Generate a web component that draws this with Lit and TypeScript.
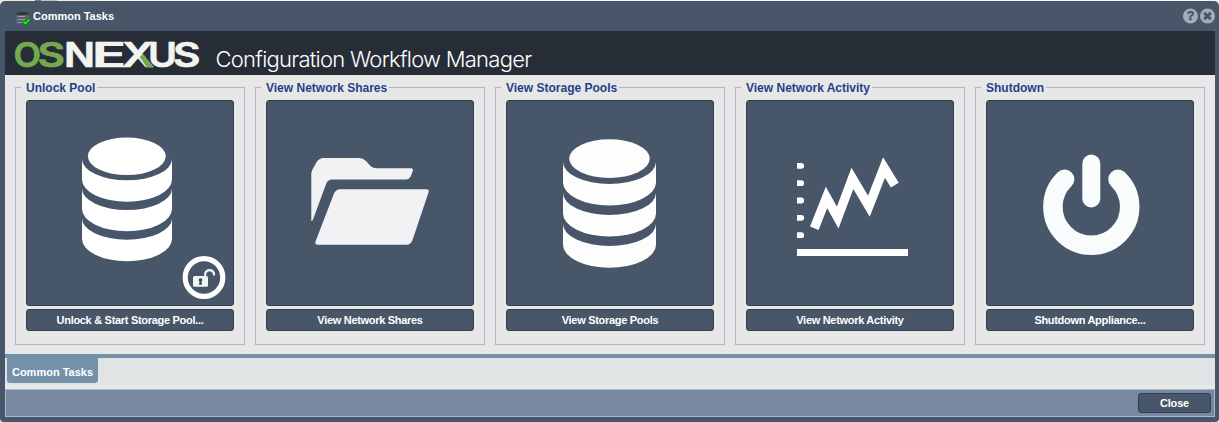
import { LitElement, html, css, svg, TemplateResult } from "lit";
import { customElement, property } from "lit/decorators.js";

const band = (l: number, r: number, top: number, side: number, ry: number) => {
  const rx = (r - l) / 2;
  return svg`<path d="M${l} ${top} A${rx} ${ry} 0 0 0 ${r} ${top} V${side} A${rx} ${ry + 1} 0 0 1 ${l} ${side} Z"/>`;
};

const unlockIcon = html`<svg viewBox="27 101 206 204" fill="#fff">
  <ellipse cx="126.8" cy="156.3" rx="38.9" ry="18.8" />
  ${band(82, 172, 159, 179.5, 21.3)} ${band(82, 172, 188.7, 209, 21.3)} ${band(82, 172, 218.4, 239, 21.3)}
  <circle cx="204" cy="277.5" r="18.8" fill="none" stroke="#fff" stroke-width="5.2" />
  <path d="M194.5 276H206.5Q208 276 208 277.5V285.3Q208 286.8 206.5 286.8H194.5Q193 286.8 193 285.3V277.5Q193 276 194.5 276Z" fill="#f3f4f6" />
  <path d="M205.2 276.5V273.4A4.6 4.6 0 0 1 214 273.4V275.6" fill="none" stroke="#f3f4f6" stroke-width="2.1" />
  <path d="M200.5 278.2a1.8 1.8 0 0 1 1 3.3l.5 3.2h-3l.5-3.2a1.8 1.8 0 0 1 1-3.3Z" fill="#36465a" />
</svg>`;

const folderIcon = html`<svg viewBox="267 101 206 204" fill="#f2f2f4">
  <path d="M311.3 221V173.5Q311.5 171 313 168.5L317 161.5Q319.500 158 323.500 158H359Q363 158 366 161L371 166.500Q373.500 168.300 376 168.300H411Q413.500 168.300 412.800 171L410.700 176.500Q409 179.500 406 179.500H332Q328 179.500 326.300 183.500L313 219.500Q312 221.500 311.300 221Z" />
  <path d="M340 189.200H426.500Q429.500 189.200 428.500 192.500L412.500 240Q410.700 244.700 406.500 244.700H318Q314.500 244.700 315.500 241.500L334 193.500Q336 189.200 340 189.200Z" />
</svg>`;

const poolIcon = html`<svg viewBox="507 101 206 204" fill="#fdfdfd">
  <ellipse cx="609.500" cy="158.600" rx="40.300" ry="19.400" />
  ${band(563, 656, 162, 182.5, 22)} ${band(563, 656, 193, 213.5, 22)} ${band(563, 656, 224, 244.7, 22)}
</svg>`;

const activityIcon = html`<svg viewBox="747 101 206 204" fill="#fff">
  ${[165.8, 183.2, 200.5, 217.8, 235.2].map(
    (y) => svg`<path d="M797 ${y - 2.9}H801.200a2.900 2.900 0 0 1 0 5.800H797Z"/>`
  )}
  <rect x="797" y="249" width="111" height="7" />
  <path d="M814.300 228.200L826.500 197.400L837.700 217.500L852.400 178.300L868.900 206.200L884 167.500L894.800 185.200" fill="none" stroke="#fff" stroke-width="9.200" stroke-miterlimit="10" />
</svg>`;

const powerIcon = html`<svg viewBox="987 101 206 204" fill="none" stroke="#f9fcfc" stroke-linecap="round">
  <path d="M1091.300 163.500V198.500" stroke-width="18" />
  <path d="M1064.600 179.300A38.400 38.400 0 1 0 1118 179.300" stroke-width="19.500" />
</svg>`;

const tasks: { group: string; action: string; icon: TemplateResult }[] = [
  { group: "Unlock Pool", action: "Unlock & Start Storage Pool...", icon: unlockIcon },
  { group: "View Network Shares", action: "View Network Shares", icon: folderIcon },
  { group: "View Storage Pools", action: "View Storage Pools", icon: poolIcon },
  { group: "View Network Activity", action: "View Network Activity", icon: activityIcon },
  { group: "Shutdown", action: "Shutdown Appliance...", icon: powerIcon },
];

// Wordmark letters: character, left edge, advance, colour.
const wordmark: [string, number, number, string][] = [
  ["O", 13.5, 27.5, "#75a850"],
  ["S", 37.5, 27.5, "#75a850"],
  ["N", 64, 31, "#f3f3ef"],
  ["E", 92, 34, "#f3f3ef"],
  ["X", 122, 32, "#f3f3ef"],
  ["U", 148, 29, "#f3f3ef"],
  ["S", 173, 27.5, "#f3f3ef"],
];

@customElement("task-card")
class TaskCard extends LitElement {
  @property() group = "";
  @property() action = "";
  @property({ attribute: false }) icon?: TemplateResult;

  static styles = css`
    :host { display: block; }
    .group {
      box-sizing: border-box; width: 230px; height: 265px; margin: 0;
      padding: 5px 10px 0; border: 1px solid #b1b3c8; min-width: 0;
    }
    legend {
      height: 15px; line-height: 17px; margin-left: -5px; padding: 0 2px 0 5px;
      font-size: 12px; font-weight: bold;
      color: #1f4287; white-space: nowrap;
    }
    button {
      box-sizing: border-box; display: block; width: 208px; margin: 0 0 3px; padding: 0;
      background: #485669; border: 1px solid #333f4e; border-radius: 3px;
      font: bold 11px/20px "Liberation Sans", Arial, sans-serif; color: #fff;
      letter-spacing: -0.3px;
    }
    .tile { height: 206px; }
    .label { height: 22px; }
    svg { display: block; width: 206px; height: 204px; }
  `;

  render() {
    return html`<fieldset class="group">
      <legend>${this.group}</legend>
      <button class="tile" aria-label=${this.action}>${this.icon}</button>
      <button class="label">${this.action}</button>
    </fieldset>`;
  }
}

@customElement("app-root")
class AppRoot extends LitElement {
  static styles = css`
    :host {
      display: block; height: 422px; overflow: hidden;
      background: linear-gradient(90deg, #f5eac9 0 35px, #607895 35px 41px, #b7c0cb 41px 57px, #f3efe2 57px 96px, #f4f6f6 96px);
      font-family: "Liberation Sans", Arial, sans-serif;
    }
    :host::before { content: ""; display: block; height: 1px; }
    .window {
      box-sizing: border-box; height: 421px; padding: 0 4px 5px 5px;
      background: #485669; border-radius: 5px 5px 4px 4px;
      display: flex; flex-direction: column;
    }
    .title {
      height: 30px; flex: none; display: flex; align-items: center;
      box-sizing: border-box; padding: 0 0 0 10px; color: #fff; font: bold 11px/14px "Liberation Sans", Arial, sans-serif;
    }
    .title .server { width: 16px; height: 16px; margin: 4px 2px 0 0; }
    .title .name { flex: 1; }
    .title .tool { width: 16px; height: 16px; margin-left: 1px; }
    .banner { height: 44px; flex: none; background: #272d37; display: flex; }
    .logo { width: 200px; height: 44px; flex: none; }
    .product {
      margin-left: 10.5px; padding-top: 14px; font: 300 22px/28px Inter, sans-serif;
      letter-spacing: -0.74px; color: #fff; white-space: nowrap;
    }
    .body { height: 279px; flex: none; box-sizing: border-box; padding: 5px 10px; background: #e7e7e7; display: flex; gap: 10px; }
    .tabs {
      height: 35px; flex: none; box-sizing: border-box; border-top: 4px solid #7591aa;
      background: linear-gradient(#e0e4e4 27px, #e9e9e9 27px); padding-left: 2px;
    }
    .tab {
      width: 91px; height: 25px; background: #7591aa; border-radius: 0 0 3px 3px;
      color: #fff; font: bold 11px/28px "Liberation Sans", Arial, sans-serif; text-align: center;
    }
    .footer {
      height: 28px; flex: none; box-sizing: border-box; border: 1px solid #a9b8cb; background: #7788a0;
      display: flex; justify-content: flex-end; padding: 3px 3px 0 0;
    }
    .close {
      box-sizing: border-box; width: 73px; height: 20px; padding: 0; border: 1px solid #333f4e; border-radius: 3px;
      background: #485669; color: #fff; font: bold 11px/18px "Liberation Sans", Arial, sans-serif;
      letter-spacing: -0.2px;
    }
  `;

  render() {
    return html`<div class="window">
      <div class="title">
        <svg class="server" viewBox="0 0 16 16">
          <path d="M3 2H12L14 5H1Z" fill="#35373b" />
          <path d="M1 5H14V8H1ZM1 8.500H14V11H1ZM1 11.500H14V13.500H1Z" fill="#606266" />
          <path d="M3 6.500H10M3 9.500H10M3 12.500H8" stroke="#9da1a6" />
          <path d="M2 6.500H3.500M2 9.500H3.500M2 12.500H3.500" stroke="#3b82d1" />
          <path d="M8 11L10.500 14L15 9" fill="none" stroke="#07780c" stroke-width="3.400" />
          <path d="M8.300 11.200L10.500 13.500L14.600 9.300" fill="none" stroke="#39e52c" stroke-width="1.600" />
        </svg>
        <span class="name">Common Tasks</span>
        <svg class="tool" viewBox="0 0 16 16">
          <circle cx="8.500" cy="8" r="7.500" fill="#a5adb9" />
          <text x="8.500" y="12.300" text-anchor="middle" font-size="12.500" font-weight="bold" stroke="#485669" stroke-width=".5" fill="#485669">?</text>
        </svg>
        <svg class="tool" viewBox="0 0 16 16">
          <circle cx="8.500" cy="8" r="7.500" fill="#a5adb9" />
          <path d="M5.200 4.700L11.800 11.300M11.800 4.700L5.200 11.300" stroke="#485669" stroke-width="3" />
        </svg>
      </div>
      <div class="banner">
        <svg class="logo" viewBox="5 31 200 44" font-family="Inter, sans-serif" font-weight="600" font-size="33.500" stroke-width=".7" stroke-linejoin="round">
          ${wordmark.map(
            ([ch, x, w, color]) =>
              svg`<text x=${x} y="66.700" textLength=${w} lengthAdjust="spacingAndGlyphs" fill=${color} stroke=${color}>${ch}</text>`
          )}
          <path d="M139.500 57L143.500 54L153 67H146.500Z" fill="#75a850" stroke="none" />
        </svg>
        <span class="product">Configuration Workflow Manager</span>
      </div>
      <div class="body">
        ${tasks.map((t) => html`<task-card .group=${t.group} .action=${t.action} .icon=${t.icon}></task-card>`)}
      </div>
      <div class="tabs"><div class="tab">Common Tasks</div></div>
      <div class="footer"><button class="close">Close</button></div>
    </div>`;
  }
}
